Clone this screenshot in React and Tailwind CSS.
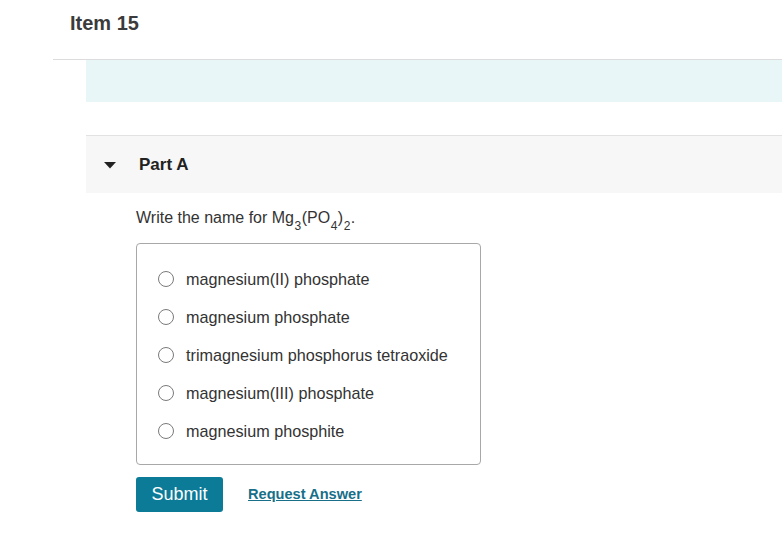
import React from "react";

const options = [
  "magnesium(II) phosphate",
  "magnesium phosphate",
  "trimagnesium phosphorus tetraoxide",
  "magnesium(III) phosphate",
  "magnesium phosphite",
];

export default function App() {
  return (
    <div className="w-[782px] h-[541px] bg-white overflow-hidden text-[#333]" style={{ fontFamily: '"Liberation Sans", Arial, sans-serif' }}>
      <div className="ml-[53px] h-[60px] border-b border-[#dcdcdc] pl-[17px] pt-[11px]">
        <h1 className="text-[20px] leading-6 font-bold text-[#3b3b3b]">Item 15</h1>
      </div>

      <div className="ml-[86px]">
        <div className="h-[42px] bg-[#e8f6f7]" />

        <div className="mt-[33px] border-t border-[#e2e2e2] h-[58px] bg-[#f7f7f7] flex items-center">
          <svg width="12" height="7" viewBox="0 0 12 7" className="ml-[18px] mt-[1px]">
            <polygon points="0,0 12,0 6,6.5" fill="#222" />
          </svg>
          <span className="ml-[23px] text-[17px] font-bold text-[#222]">Part A</span>
        </div>

        <div className="pl-[50px]">
          <p className="mt-[15px] text-[16px] leading-[19px] text-[#333]">
            Write the name for Mg<sub className="text-[12px] align-[-4px] px-[0.5px]">3</sub>(PO<sub className="text-[12px] align-[-4px] px-[0.5px]">4</sub>)<sub className="text-[12px] align-[-4px] px-[0.5px]">2</sub>.
          </p>

          <div className="mt-[16px] w-[345px] border border-[#a8a8a8] rounded-[4px] pt-[16px] pb-[14px]">
            {options.map((o) => (
              <label key={o} className="flex items-center h-[38px] pl-[21px]">
                <span className="w-[16px] h-[16px] rounded-full border border-[#7a7a7a] bg-white shrink-0" />
                <span className="ml-[12px] text-[16.2px] text-[#333]">{o}</span>
              </label>
            ))}
          </div>

          <div className="mt-[12px] flex items-center">
            <button className="w-[87px] h-[35px] bg-[#0b7b98] rounded-[3px] text-white text-[18px]">Submit</button>
            <a className="ml-[25px] text-[14.6px] font-bold text-[#176f88] underline">Request Answer</a>
          </div>
        </div>
      </div>
    </div>
  );
}
